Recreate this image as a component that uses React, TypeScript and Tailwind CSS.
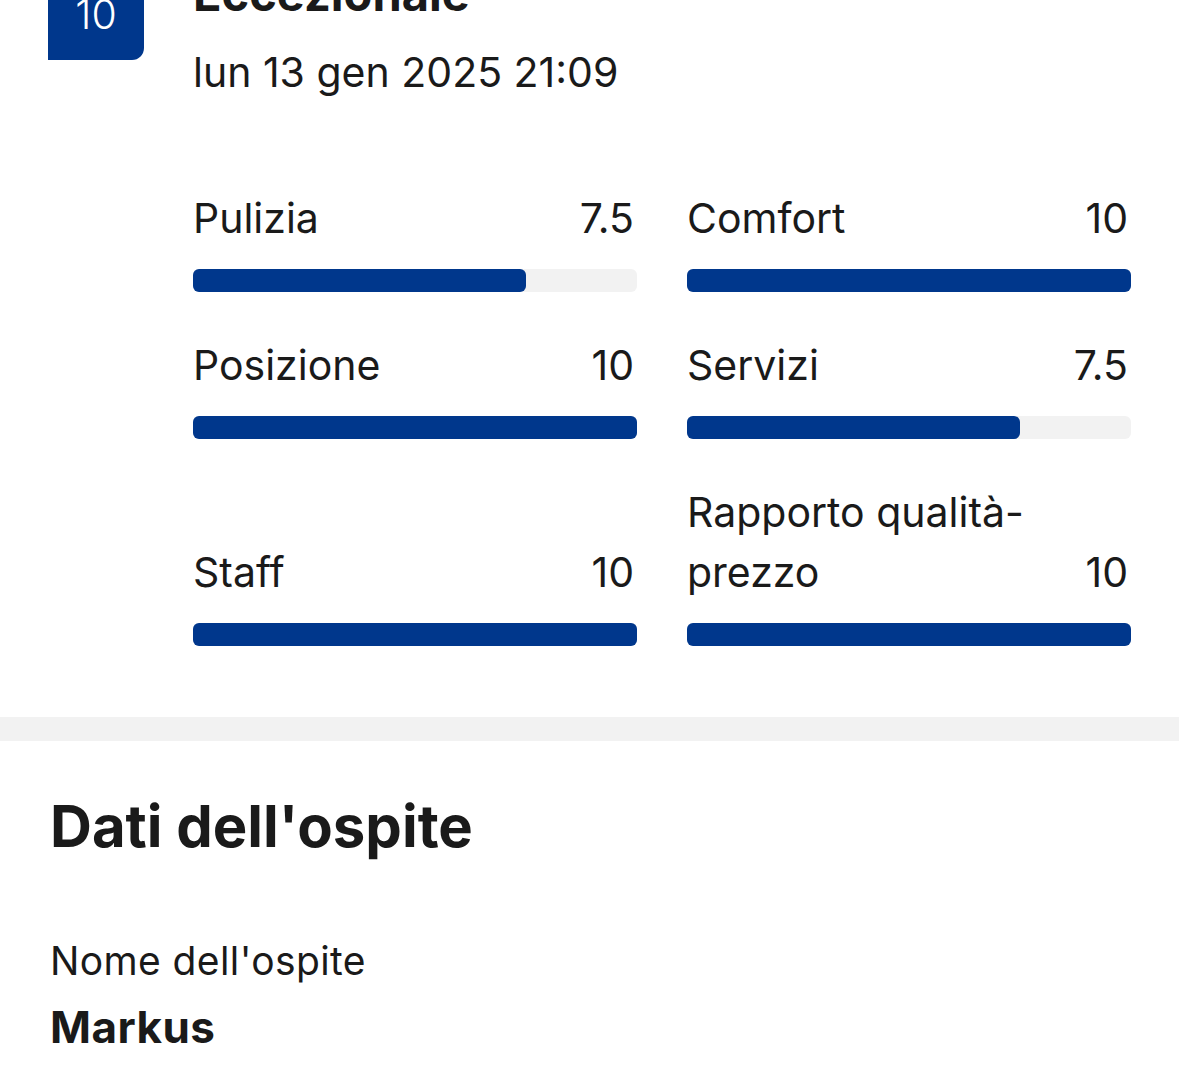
import React from "react";

type Rating = { label: React.ReactNode; value: string; score: number };

const ratings: Rating[] = [
  { label: "Pulizia", value: "7.5", score: 7.5 },
  { label: "Comfort", value: "10", score: 10 },
  { label: "Posizione", value: "10", score: 10 },
  { label: "Servizi", value: "7.5", score: 7.5 },
  { label: "Staff", value: "10", score: 10 },
  { label: "Rapporto qualità-prezzo", value: "10", score: 10 },
];

function RatingRow({ r }: { r: Rating }) {
  return (
    <div className="flex flex-col justify-end">
      <div className="flex items-end justify-between text-[41px] leading-[60px] text-[#1a1a1a]">
        <span className="max-w-[360px]">{r.label}</span>
        <span className="pr-[3px]">{r.value}</span>
      </div>
      <div className="mt-[21px] h-[23px] w-full rounded-[6px] bg-[#f2f2f2]">
        <div
          className="h-full rounded-[6px] bg-[#00378c]"
          style={{ width: `${(r.score / 10) * 100}%` }}
        />
      </div>
    </div>
  );
}

export default function App() {
  return (
    <div
      className="min-h-[1080px] w-[1179px] overflow-hidden bg-white text-[#1a1a1a]"
      style={{ fontFamily: "Inter, 'Noto Sans', sans-serif" }}
    >
      {/* Header */}
      <div className="-mt-[34px] flex px-[48px]">
        <div className="-mt-[2px] flex h-[96px] w-[96px] shrink-0 items-center justify-center rounded-t-[12px] rounded-br-[12px] bg-[#00378c] text-[41px] font-light text-white">
          <span className="mt-[6px]">10</span>
        </div>
        <div className="ml-[49px] flex flex-col">
          <div className="text-[47px] font-bold leading-[56px]">Eccezionale</div>
          <div className="mt-[25px] text-[41px] leading-[50px]">lun 13 gen 2025 21:09</div>
        </div>
      </div>

      {/* Ratings grid */}
      <div className="mt-[91px] grid grid-cols-2 gap-x-[50px] gap-y-[43px] pl-[193px] pr-[48px]">
        {ratings.map((r, i) => (
          <RatingRow key={i} r={r} />
        ))}
      </div>

      {/* Separator */}
      <div className="mt-[71px] h-[24px] w-full bg-[#f2f2f2]" />

      {/* Guest data */}
      <div className="px-[50px]">
        <h2 className="mt-[51px] text-[58px] font-bold leading-[68px]">Dati dell'ospite</h2>
        <div className="mt-[78px] text-[39px] leading-[46px] tracking-[0.01em]">Nome dell'ospite</div>
        <div className="mt-[17px] text-[44px] font-bold leading-[52px] tracking-[0.01em]">Markus</div>
      </div>
    </div>
  );
}
